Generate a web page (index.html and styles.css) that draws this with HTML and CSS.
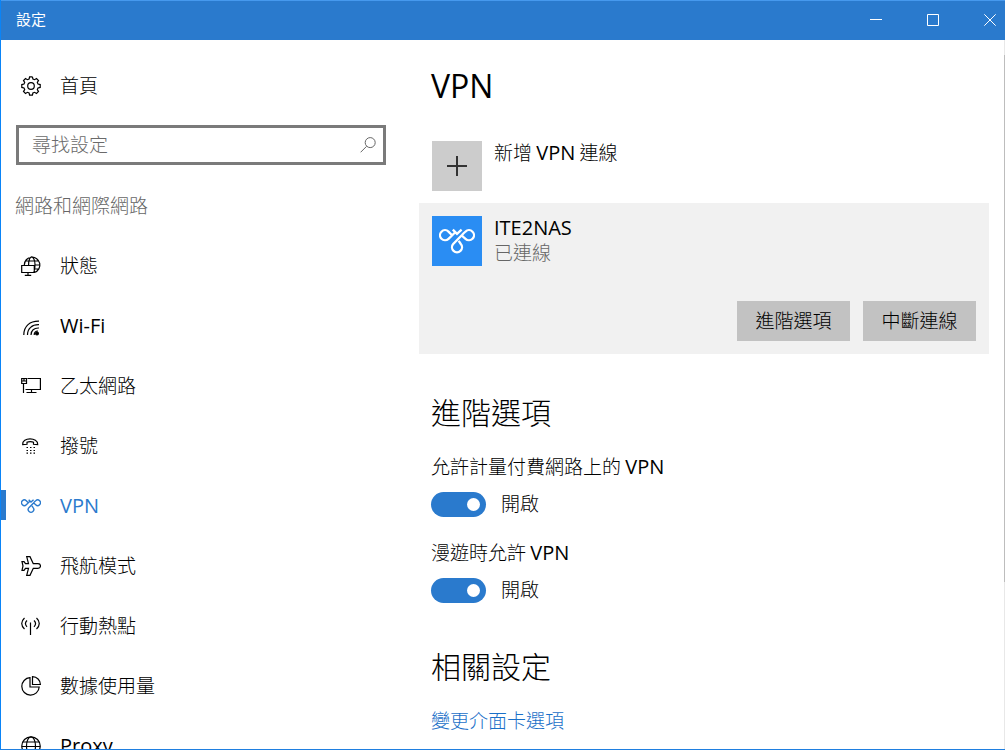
FILE: index.html
```html
<!DOCTYPE html>
<html lang="zh-Hant">
<head>
<meta charset="utf-8">
<title>設定</title>
<link rel="stylesheet" href="styles.css">
</head>
<body>
<svg class="defs" aria-hidden="true">
  <symbol id="vpn" viewBox="0 0 36 26">
    <path d="M26.500 3.600A5 5 0 1 1 26.500 10.800L23.400 8.200M26.500 3.600Q25 4.600 23 7L14.200 16A5 5 0 1 0 21.800 16L19.700 12.800M12.600 6.800L9.500 3.600A5 5 0 1 0 9.500 10.800L15.500 5M13.800 1.600L18 5.800L22.600 1.600"/>
  </symbol>
</svg>
<div class="window">
  <header class="titlebar">
    <span class="title">設定</span>
    <button class="caption" aria-label="最小化"><svg width="12" height="12"><path d="M0 5.5H12"/></svg></button>
    <button class="caption" aria-label="最大化"><svg width="12" height="12"><path d="M.5 .5H11.5V11.5H.5Z"/></svg></button>
    <button class="caption close" aria-label="關閉"><svg width="12" height="12"><path d="M.3 .3L11.7 11.7M11.7 .3L.3 11.7"/></svg></button>
  </header>
  <div class="body">
    <aside class="sidebar">
      <a class="item" href="#"><svg class="icon" viewBox="0 0 20 20"><path d="M8.1 3L8.6 .8M11.4 .8L11.9 3L13.6 3.7L15.5 2.5L17.5 4.5L16.3 6.4L17 8.1L19.2 8.6V11.4L17 11.9L16.3 13.6L17.5 15.5L15.5 17.5L13.6 16.3L11.9 17L11.4 19.2H8.6L8.1 17L6.4 16.3L4.5 17.5L2.5 15.5L3.7 13.6L3 11.9L.8 11.4V8.6L3 8.1L3.7 6.4L2.5 4.5L4.5 2.5L6.4 3.7L8.1 3L8.6 .8H11.4"/><circle cx="10" cy="10" r="3.3"/></svg><span>首頁</span></a>
      <label class="search">
        <input type="text" placeholder="尋找設定" aria-label="尋找設定">
        <svg class="glass" viewBox="0 0 16 16"><circle cx="10.2" cy="5.6" r="5"/><path d="M6.6 9.3L.6 15.3"/></svg>
      </label>
      <h2 class="group">網路和網際網路</h2>
      <nav>
        <a class="item" href="#"><svg class="icon" viewBox="0 0 20 20"><path d="M3.3 9A7.8 7.8 0 1 1 13.5 16.4M7.6 9C7.6 4 9 .8 10.6 .8S14 4 14 8.500S13.400 14 12.800 16.300M4 5H17.600M14 9H18.600M13.600 13H17.500M.700 9.500H13.300V16.500H.700ZM7 16.500V19M3.800 19.300H10.200"/></svg><span>狀態</span></a>
        <a class="item" href="#"><svg class="icon" viewBox="0 0 20 20"><path d="M2.800 19C2.800 10 9 5 18 5.200M6.500 19C6.500 12.500 11 8.500 18 8.700M10 19C10 14.500 13 11.700 18 12"/><circle class="solid" cx="16" cy="17.500" r="1.400"/><path d="M13.200 19C13.200 16.500 14.500 15 17 15"/></svg><span class="latin">Wi-Fi</span></a>
        <a class="item" href="#"><svg class="icon" viewBox="0 0 20 20"><path d="M6.500 2.500H19.400V13.500H4.500M.700 2.500H5.500V7.500H.700ZM3 3V5.500M.7 5H5.500M2.500 7.500V17M10.500 13.500V16.500M5.500 16.500H15.500"/></svg><span>乙太網路</span></a>
        <a class="item" href="#"><svg class="icon" viewBox="0 0 20 20"><path d="M1.700 8.500C1 1 17 1 16.700 8.500L12.500 8.300V6.200C11 5.400 7.500 5.400 6 6.200V8.300Z"/><path class="dots" d="M5.500 11.500H14M5.500 14.500H14M5.500 17.200H14"/></svg><span>撥號</span></a>
        <a class="item current" href="#" aria-current="page"><svg class="icon thick"><use href="#vpn"/></svg><span class="latin">VPN</span></a>
        <a class="item" href="#"><svg class="icon" viewBox="0 0 20 20"><path d="M12.300 7.700L9 .700H5.700L7.500 7.700H4.500L3 5.600H1L2 10L1 14.400H3L4.500 12.300H7.500L5.700 19.300H9L12.300 12.300H17C20.300 12.300 20.300 7.700 17 7.700Z"/></svg><span>飛航模式</span></a>
        <a class="item" href="#"><svg class="icon" viewBox="0 0 20 20"><path d="M9.500 6.500V19M3.500 2C-.2 5.500-.2 9.500 3.500 13M6 4.500C4 6.500 4 8.800 6 10.800M15.500 2C19.200 5.500 19.200 9.500 15.500 13M13 4.500C15 6.500 15 8.800 13 10.800"/></svg><span>行動熱點</span></a>
        <a class="item" href="#"><svg class="icon" viewBox="0 0 20 20"><path d="M9 1.700A8.700 8.700 0 1 0 18.200 11H9ZM11.500 .700V8.500H19.400C19.300 4 16 .800 11.500 .700Z"/></svg><span>數據使用量</span></a>
        <a class="item" href="#"><svg class="icon" viewBox="0 0 20 20"><circle cx="10" cy="10" r="9.200"/><ellipse cx="10" cy="10" rx="4.500" ry="9.200"/><path d="M2 6H18M.800 10.500H19.200M2 14.500H18"/></svg><span class="latin">Proxy</span></a>
      </nav>
    </aside>
    <main class="main">
      <h1>VPN</h1>
      <button class="entry add"><span class="tile"><svg class="plus" viewBox="0 0 20 20"><path d="M10 0V20M0 10H20"/></svg></span><span>新增 <span class="latin">VPN</span> 連線</span></button>
      <section class="card">
        <div class="entry"><span class="tile blue"><svg class="vpn-mark"><use href="#vpn"/></svg></span><div><div class="latin name">ITE2NAS</div><div class="status">已連線</div></div></div>
        <div class="actions"><button class="btn">進階選項</button><button class="btn">中斷連線</button></div>
      </section>
      <section class="section">
        <h2>進階選項</h2>
        <label class="setting" for="metered">允許計量付費網路上的 <span class="latin">VPN</span></label>
        <div class="toggle"><input type="checkbox" role="switch" id="metered" checked><span>開啟</span></div>
        <label class="setting" for="roaming">漫遊時允許 <span class="latin">VPN</span></label>
        <div class="toggle"><input type="checkbox" role="switch" id="roaming" checked><span>開啟</span></div>
      </section>
      <section class="section">
        <h2>相關設定</h2>
        <a class="link" href="#">變更介面卡選項</a>
      </section>
    </main>
    <div class="scrollbar"></div>
  </div>
</div>
</body>
</html>
```
FILE: styles.css
```css
* { box-sizing: border-box; }
body {
  margin: 0;
  font: 300 19px/25px "Noto Sans CJK TC", sans-serif;
  color: #000;
}
button, input { font: inherit; color: inherit; }
a { color: inherit; text-decoration: none; }
h1, h2 { margin: 0; font-weight: 300; }
svg { fill: none; stroke: currentColor; flex: none; }
.defs { position: absolute; width: 0; height: 0; }
.latin { font-family: "Open Sans", sans-serif; font-size: 20px; font-weight: 400; line-height: 20px; }

.window {
  height: 100vh;
  display: flex;
  flex-direction: column;
  overflow: hidden;
  background: #fff;
  border-left: 1px solid #0a84f7;
  border-bottom: 1px solid #1f7fe0;
}
.titlebar {
  flex: 0 0 40px;
  display: flex;
  border-top: 1px solid #4699ee;
  background: #2a7acd;
  color: #fff;
}
.title { flex: 1; padding-left: 15px; font-size: 15px; font-weight: 400; line-height: 35px; }
.caption {
  width: 57px;
  padding: 0 0 2px;
  border: 0;
  background: none;
  display: flex;
  align-items: center;
  justify-content: center;
}
.close { width: 44px; padding-left: 23px; justify-content: flex-start; }

.body { flex: 1; min-height: 0; display: flex; }
.sidebar { flex: 0 0 418px; padding-top: 16px; }
.item {
  height: 60px;
  display: flex;
  align-items: center;
  gap: 19px;
  padding-left: 20px;
}
.item span { padding-bottom: 3px; }
.item .latin { padding-bottom: 1px; }
.icon { width: 20px; height: 20px; stroke-width: 1.2; }
.thick { stroke-width: 2.5; }
.solid { fill: currentColor; }
.dots { stroke-dasharray: 1.5 2; }
.current { color: #2a7acd; padding-left: 0; gap: 0; }
.current::before { content: ""; width: 5px; height: 30px; margin-bottom: 2px; background: #2a7acd; }
.current .icon { margin: 0 19px 0 15px; }

.search {
  display: flex;
  align-items: center;
  height: 40px;
  margin: 9px 33px 0 15px;
  padding: 0 7px 0 13px;
  border: 3px solid #7a7a7a;
}
.search input { flex: 1; min-width: 0; padding: 0 0 3px; border: 0; outline: 0; background: none; }
.search input::placeholder { color: #6a6a6a; opacity: 1; }
.glass { width: 16px; height: 16px; color: #666; }
.group { margin: 25px 0 16px 14px; font-size: 19px; line-height: 30px; color: #666; }

.main { flex: 1; min-width: 0; padding: 16px 15px 0 0; }
h1 { padding-left: 12px; font: 400 32px/60px "Open Sans", sans-serif; }
.entry { display: flex; align-items: flex-start; gap: 12px; line-height: 22px; text-align: left; }
.add { margin: 25px 0 12px; padding: 0 0 0 13px; border: 0; background: none; }
.tile {
  width: 50px;
  height: 50px;
  display: flex;
  align-items: center;
  justify-content: center;
  background: #ccc;
}
.blue { background: #2a8df3; color: #fff; }
.plus { width: 20px; height: 20px; stroke-width: 2; color: #333; }
.vpn-mark { width: 36px; height: 26px; stroke-width: 2.3; }
.card { padding: 13px; background: #f1f1f1; }
.name { line-height: 23px; }
.status { margin-top: 2px; color: #666; }
.actions { display: flex; justify-content: flex-end; gap: 13px; margin-top: 35px; }
.btn { width: 113px; height: 40px; padding: 0 0 3px; border: 0; background: #c2c2c2; }

.section { margin-top: 37px; padding-left: 12px; }
.section + .section { margin-top: 42px; }
.section h2 { margin-bottom: 22px; font-size: 30px; line-height: 40px; }
.setting { display: block; margin-bottom: 14px; }
.toggle { display: flex; align-items: center; gap: 15px; height: 25px; }
.toggle span { padding-bottom: 4px; }
.toggle + .setting { margin-top: 22px; }
.toggle input {
  appearance: none;
  display: flex;
  align-items: center;
  justify-content: flex-end;
  width: 55px;
  height: 25px;
  margin: 0;
  padding-right: 6px;
  border-radius: 13px;
  background: #2a7acd;
}
.toggle input::before { content: ""; width: 13px; height: 13px; border-radius: 50%; background: #fff; }
.toggle input:not(:checked) { justify-content: flex-start; padding-left: 6px; background: #999; }
.link { display: block; color: #1a6fc8; }

.scrollbar { flex: 0 0 1px; padding-top: 15px; background: #e8e8e8; }
.scrollbar::before { content: ""; display: block; height: 76%; background: #bdbdbd; }
```
